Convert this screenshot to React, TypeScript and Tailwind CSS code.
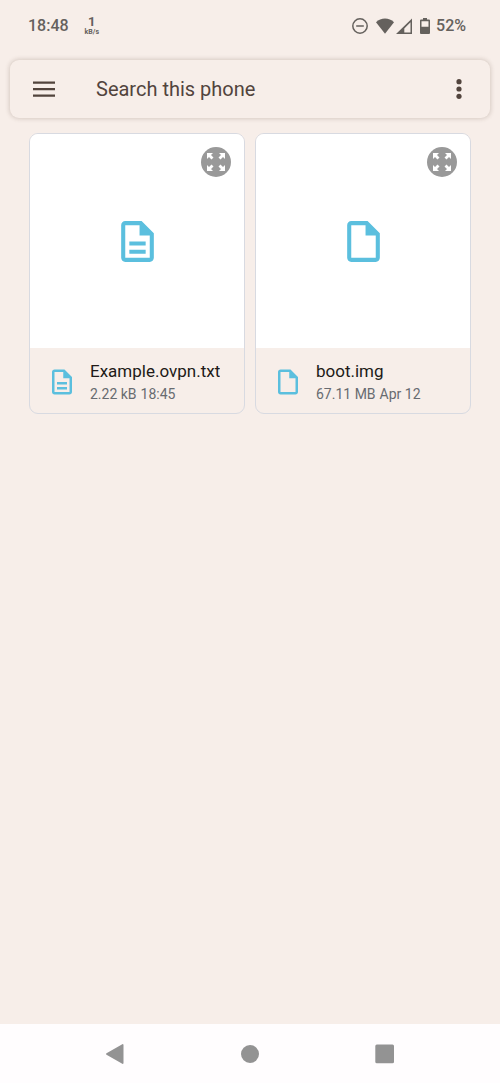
// App.tsx
import { useState } from 'react';

type FileEntry = {
  name: string;
  size: string;
  modified: string;
  kind: 'text' | 'binary';
};

const files: FileEntry[] = [
  { name: 'Example.ovpn.txt', size: '2.22 kB', modified: '18:45', kind: 'text' },
  { name: 'boot.img', size: '67.11 MB', modified: 'Apr 12', kind: 'binary' },
];

function FileIcon({ kind, className }: { kind: FileEntry['kind']; className: string }) {
  return (
    <svg viewBox="0 0 24 24" fill="currentColor" aria-hidden="true" className={className}>
      <path d="M14 2H6c-1.1 0-2 .9-2 2v16c0 1.1.9 2 2 2h12c1.1 0 2-.9 2-2V8l-6-6zm4 18H6V4h7v5h5v11z" />
      {kind === 'text' && <path d="M8 12h8v2H8zM8 16h8v2H8z" />}
    </svg>
  );
}

function ExpandIcon() {
  return (
    <svg viewBox="0 0 18 18" aria-hidden="true" fill="#fff" className="size-[18px]">
      <path d="M0 0h6L4 2l2.500 2.500-2 2L2 4 0 6z" />
      <path d="M18 0v6l-2-2-2.500 2.500-2-2L14 2l-2-2z" />
      <path d="M0 18v-6l2 2 2.500-2.500 2 2L4 16l2 2z" />
      <path d="M18 18h-6l2-2-2.500-2.500 2-2L16 14l2-2z" />
    </svg>
  );
}

function StatusBar() {
  return (
    <header className="flex h-[51px] items-center justify-between pr-[34px] pl-7 text-[#65615d]">
      <div className="flex items-center gap-4">
        <span className="text-base font-medium">18:48</span>
        <span className="flex flex-col items-center pt-px">
          <span className="text-[13px] leading-3 font-bold">1</span>
          <span className="text-[7px] leading-2 font-bold">kB/s</span>
        </span>
      </div>
      <div className="flex items-center">
        {/* Do not disturb */}
        <svg viewBox="0 0 16 16" className="mr-2 size-4" fill="none" stroke="currentColor" strokeWidth="1.5">
          <circle cx="8" cy="8" r="7.200" />
          <path d="M4.200 8h7.600" />
        </svg>
        {/* Wifi */}
        <svg viewBox="0 0 18 16" className="mr-0.5 h-4 w-[18px]" fill="currentColor">
          <path d="M0 4.200C2.500 1.700 5.600.500 9 .500s6.500 1.200 9 3.700L9 15.800z" />
        </svg>
        {/* Signal */}
        <svg viewBox="0 0 16 16" className="mr-2 size-4" fill="currentColor">
          <path d="M16 .500V16H0zM14.500 4.200 8.300 10.400v4.100h6.200z" fillRule="evenodd" />
        </svg>
        {/* Battery */}
        <svg viewBox="0 0 10 16" className="mr-1.5 h-4 w-2.5" fill="currentColor">
          <path d="M3 0h4v1.500h2a1 1 0 0 1 1 1V15a1 1 0 0 1-1 1H1a1 1 0 0 1-1-1V2.500a1 1 0 0 1 1-1h2zM1.500 3.300v5.500h7v-5.500z" fillRule="evenodd" />
        </svg>
        <span className="text-base font-medium">52%</span>
      </div>
    </header>
  );
}

function SearchBar() {
  const [query, setQuery] = useState('');

  return (
    <div className="mx-2.5 mt-[9px] flex h-[58px] items-center rounded-[9px] bg-[#f7eee9] px-[22px] shadow-[0_0_4px_1px_rgba(90,65,50,0.2)]">
      <button type="button" aria-label="Open menu" className="text-[#52443d]">
        <svg viewBox="0 0 24 16" className="h-4 w-6" fill="currentColor">
          <path d="M1 .500h22v2.200H1zM1 7h22v2.200H1zM1 13.500h22v2.200H1z" />
        </svg>
      </button>
      <input
        type="text"
        aria-label="Search this phone"
        placeholder="Search this phone"
        value={query}
        onChange={(e) => setQuery(e.target.value)}
        className="ml-10 min-w-0 flex-1 bg-transparent text-xl text-[#52443d] outline-none placeholder:text-[#52443d]"
      />
      <button type="button" aria-label="More options" className="px-1.5 text-[#52443d]">
        <svg viewBox="0 0 6 20" className="h-5 w-1.5" fill="currentColor">
          <circle cx="3" cy="2.700" r="2.600" />
          <circle cx="3" cy="10" r="2.600" />
          <circle cx="3" cy="17.300" r="2.600" />
        </svg>
      </button>
    </div>
  );
}

function FileCard({ file }: { file: FileEntry }) {
  return (
    <article className="overflow-hidden rounded-[9px] border border-[#d8dae1]">
      <div className="relative flex aspect-square items-center justify-center bg-white">
        <FileIcon kind={file.kind} className="size-[49px] text-[#5bbfde]" />
        <button
          type="button"
          aria-label={`Preview ${file.name}`}
          className="absolute top-[13px] right-[13px] flex size-[30px] items-center justify-center rounded-full bg-[#999]"
        >
          <ExpandIcon />
        </button>
      </div>
      <div className="flex h-[65px] items-center pt-0.5 pl-[17px]">
        <FileIcon kind={file.kind} className="size-[30px] shrink-0 text-[#5bbfde]" />
        <div className="ml-[13px] min-w-0">
          <h2 className="truncate text-[17px] leading-6 text-[#211a17]">{file.name}</h2>
          <p className="flex gap-1 text-sm leading-[22px] text-[#686b70]">
            <span>{file.size}</span>
            <span>{file.modified}</span>
          </p>
        </div>
      </div>
    </article>
  );
}

function NavigationBar() {
  return (
    <nav className="grid h-[59px] grid-cols-3 place-items-center bg-[#fffdfe] px-12 text-[#939393]">
      <button type="button" aria-label="Back">
        <svg viewBox="0 0 20 20" className="size-5" fill="currentColor">
          <path d="M17.300.200a.800.800 0 0 1 1.200.700v18.200a.800.800 0 0 1-1.200.700L1.500 10.700a.800.800 0 0 1 0-1.400z" />
        </svg>
      </button>
      <button type="button" aria-label="Home">
        <svg viewBox="0 0 18 18" className="size-[18px]" fill="currentColor">
          <circle cx="9" cy="9" r="9" />
        </svg>
      </button>
      <button type="button" aria-label="Recent apps">
        <svg viewBox="0 0 20 20" className="size-5" fill="currentColor">
          <rect x=".300" y=".500" width="18.700" height="18.700" rx="1.500" />
        </svg>
      </button>
    </nav>
  );
}

export default function App() {
  return (
    <div className="flex min-h-screen flex-col bg-[#f7eee9] font-[Roboto,'Liberation_Sans',sans-serif]">
      <StatusBar />
      <SearchBar />
      <main className="mt-[15px] grid flex-1 grid-cols-2 content-start gap-2.5 px-[29px]">
        {files.map((file) => (
          <FileCard key={file.name} file={file} />
        ))}
      </main>
      <NavigationBar />
    </div>
  );
}
